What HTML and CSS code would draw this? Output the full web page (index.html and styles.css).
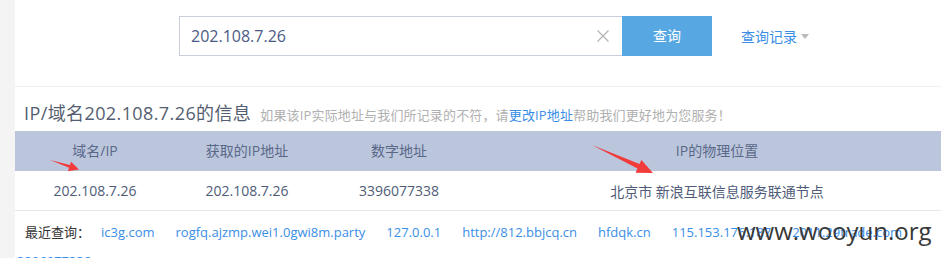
FILE: index.html
```html
<!DOCTYPE html>
<html>
<head lang="zh-CN">
    <meta charset="UTF-8">
    <title>IP查询</title>
    <link rel="stylesheet" href="styles.css">
</head>
<body>
<div class="page">
    <div class="search">
        <div class="search-box">
            <span class="search-text">202.108.7.26</span>
            <svg class="clear" width="12" height="12" viewBox="0 0 12 12">
                <path d="M0.5 0.5 L11.5 11.5 M11.5 0.5 L0.5 11.5" stroke="#b4b4b4" stroke-width="1.2" fill="none"/>
            </svg>
        </div>
        <div class="search-btn">查询</div>
        <div class="history">查询记录<span class="caret"></span></div>
    </div>

    <div class="info">
        <h2 class="title">IP/域名202.108.7.26的信息<span class="tip">如果该IP实际地址与我们所记录的不符，请<a href="#">更改IP地址</a>帮助我们更好地为您服务！</span></h2>
        <table class="result">
            <colgroup>
                <col class="c1"><col class="c2"><col class="c3"><col class="c4">
            </colgroup>
            <thead>
                <tr><th>域名/IP</th><th>获取的IP地址</th><th>数字地址</th><th>IP的物理位置</th></tr>
            </thead>
            <tbody>
                <tr><td>202.108.7.26</td><td>202.108.7.26</td><td>3396077338</td><td>北京市 新浪互联信息服务联通节点</td></tr>
            </tbody>
        </table>
    </div>

    <div class="recent">
        <span class="label">最近查询：</span>
        <a href="#">ic3g.com</a>
        <a href="#">rogfq.ajzmp.wei1.0gwi8m.party</a>
        <a href="#">127.0.0.1</a>
        <a href="#">http://812.bbjcq.cn</a>
        <a href="#">hfdqk.cn</a>
        <a href="#">115.153.176.187</a>
        <a href="#">2011.29trade.com</a>
    </div>
    <div class="recent-more"><a href="#">3396077338</a></div>

    <!-- 标注箭头 -->
    <svg class="marks" width="940" height="258" viewBox="15 0 940 258">
        <polygon points="50,160 70,165 71.05,161.65 79,169.5 67.95,171.15 69,167.8" fill="#f23b3b"/>
        <polygon points="592,145 639.54,164.03 641.42,159.94 653,173 635.58,172.66 637.46,168.57" fill="#f23b3b"/>
    </svg>
    <div class="watermark">www.wooyun.org</div>
</div>
</body>
</html>
```

FILE: styles.css
```css
* { margin: 0; padding: 0; }
html, body { overflow: hidden; }
body {
    background-color: #f4f4f4;
    font-family: "Open Sans", "Noto Sans CJK SC", sans-serif;
    font-size: 14px;
}
a { color: #3a8ee6; text-decoration: none; }
.page {
    width: 940px;
    height: 258px;
    margin-left: 15px;
    background-color: #fff;
    position: relative;
    overflow: hidden;
}

/* 搜索框 */
.search {
    display: flex;
    align-items: center;
    padding: 16px 0 30px 164px;
}
.search-box {
    width: 443px;
    height: 40px;
    box-sizing: border-box;
    border: 1px solid #c8cedc;
    border-right: none;
    display: flex;
    align-items: center;
    padding: 0 13px 0 11px;
}
.search-text {
    flex: 1;
    font-size: 16px;
    color: #4c5a86;
}
.search-btn {
    width: 90px;
    height: 40px;
    line-height: 40px;
    text-align: center;
    background-color: #57a7e3;
    color: #fff;
}
.history {
    margin-left: 29px;
    color: #3a8ee6;
    display: flex;
    align-items: center;
}
.caret {
    margin-left: 4px;
    border-left: 4px solid transparent;
    border-right: 4px solid transparent;
    border-top: 5px solid #bbb;
}

/* 信息表 */
.info {
    border-top: 1px solid #eef0f3;
}
.title {
    font-size: 18px;
    font-weight: normal;
    color: #555e70;
    line-height: 24px;
    letter-spacing: 0.4px;
    padding: 14px 0 4px 9px;
}
.tip {
    font-size: 13px;
    letter-spacing: 0.15px;
    color: #b0b0b0;
    margin-left: 9px;
}
.result {
    width: 940px;
    table-layout: fixed;
    border-collapse: collapse;
}
.c1 { width: 160px; }
.c2 { width: 144px; }
.c3 { width: 160px; }
.c4 { width: 476px; }
.result th {
    height: 38px;
    padding-bottom: 2px;
    background-color: #bbc6dd;
    font-weight: normal;
    color: #5a6888;
}
.result td {
    height: 39px;
    text-align: center;
    color: #4f5b78;
    border-bottom: 1px solid #e8e8ec;
}

/* 最近查询 */
.recent {
    display: flex;
    gap: 21px;
    white-space: nowrap;
    font-size: 13px;
    line-height: 20px;
    padding: 11px 0 0 10px;
}
.recent .label {
    color: #333;
    margin-right: -10px;
}
.recent-more {
    font-size: 13px;
    line-height: 20px;
    padding: 9px 0 0 2px;
}

.marks {
    position: absolute;
    left: 0;
    top: 0;
}
.watermark {
    position: absolute;
    left: 722px;
    top: 215px;
    font-size: 24px;
    line-height: 32px;
    color: #383838;
}
```
